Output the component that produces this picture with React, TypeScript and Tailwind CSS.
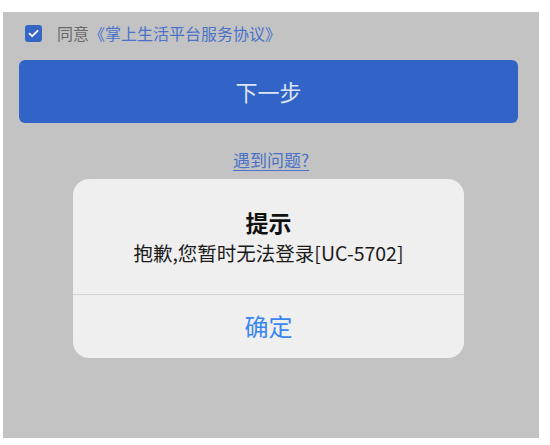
import React from "react";

const font = { fontFamily: '"Noto Sans CJK SC", "Noto Sans", sans-serif' };

function CheckBox() {
  return (
    <span className="grid h-[17px] w-[17px] place-items-center rounded-[3px] bg-[#3565c5]">
      <svg width="11" height="9" viewBox="0 0 11 9" fill="none">
        <path d="M1.5 4.6 L4.2 7.2 L9.6 1.8" stroke="#ffffff" strokeWidth="1.8" strokeLinecap="round" strokeLinejoin="round" />
      </svg>
    </span>
  );
}

export default function App() {
  return (
    <div className="h-[445px] w-[550px] overflow-hidden bg-white pl-[3px] pt-[12px]" style={font}>
      <div className="relative h-[426px] w-[536px] bg-[#c3c3c3]">
        <div className="flex items-center pl-[22px] pt-[13px]">
          <CheckBox />
          <span className="ml-[15px] text-[16px] leading-[17px] text-[#6a6a6a]">同意</span>
          <span className="text-[16px] leading-[17px] text-[#4a72c8]">《掌上生活平台服务协议》</span>
        </div>

        <button
          type="button"
          className="ml-[16px] mt-[18px] flex h-[63px] w-[499px] items-center justify-center rounded-[6px] bg-[#3263c6] text-[22px] text-[#dde4f3]"
        >
          下一步
        </button>

        <div className="mt-[25px] text-center">
          <span className="text-[17px] leading-[24px] text-[#4a72c8] underline underline-offset-[3px]">遇到问题?</span>
        </div>

        <div className="absolute left-[70px] top-[167px] flex h-[179px] w-[391px] flex-col overflow-hidden rounded-[16px] bg-[#efefef]">
          <div className="flex h-[116px] flex-col items-center border-b border-[#d2d2d2] pt-[30px]">
            <div className="text-[23px] font-bold leading-[26px] text-[#111111]">提示</div>
            <div className="mt-[5px] text-[19.5px] leading-[26px] text-[#1a1a1a]">抱歉,您暂时无法登录[UC-5702]</div>
          </div>
          <div className="flex flex-1 items-center justify-center pb-[2px] text-[24px] text-[#3a86ef]">确定</div>
        </div>
      </div>
    </div>
  );
}
